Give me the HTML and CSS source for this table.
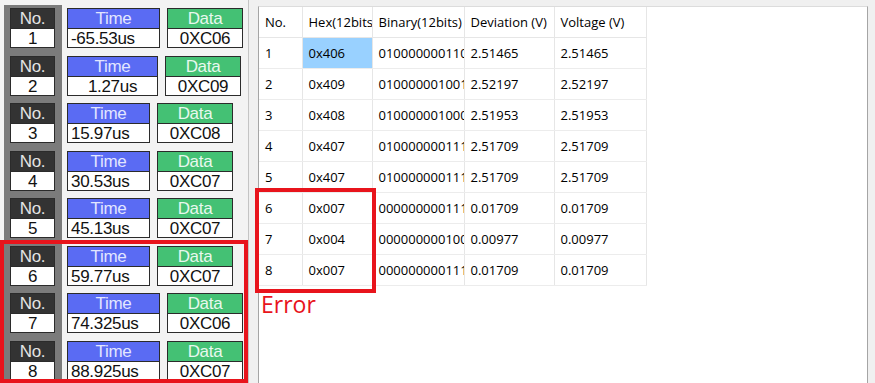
FILE: index.html
```html
<!DOCTYPE html>
<html>
<head>
<meta charset="utf-8">
<link rel="stylesheet" href="styles.css">
</head>
<body>
<div class="app">
  <div class="left">
    <div class="row">
      <div class="rail"><div class="box nobox"><div class="hd">No.</div><div class="val">1</div></div></div>
      <div class="box time t-l"><div class="hd">Time</div><div class="val">-65.53us</div></div>
      <div class="box data"><div class="hd">Data</div><div class="val">0XC06</div></div>
    </div>
    <div class="row">
      <div class="rail"><div class="box nobox"><div class="hd">No.</div><div class="val">2</div></div></div>
      <div class="box time t-m"><div class="hd">Time</div><div class="val center">1.27us</div></div>
      <div class="box data"><div class="hd">Data</div><div class="val">0XC09</div></div>
    </div>
    <div class="row">
      <div class="rail"><div class="box nobox"><div class="hd">No.</div><div class="val">3</div></div></div>
      <div class="box time t-s"><div class="hd">Time</div><div class="val">15.97us</div></div>
      <div class="box data"><div class="hd">Data</div><div class="val">0XC08</div></div>
    </div>
    <div class="row">
      <div class="rail"><div class="box nobox"><div class="hd">No.</div><div class="val">4</div></div></div>
      <div class="box time t-s"><div class="hd">Time</div><div class="val">30.53us</div></div>
      <div class="box data"><div class="hd">Data</div><div class="val">0XC07</div></div>
    </div>
    <div class="row">
      <div class="rail"><div class="box nobox"><div class="hd">No.</div><div class="val">5</div></div></div>
      <div class="box time t-s"><div class="hd">Time</div><div class="val">45.13us</div></div>
      <div class="box data"><div class="hd">Data</div><div class="val">0XC07</div></div>
    </div>
    <div class="row">
      <div class="rail"><div class="box nobox"><div class="hd">No.</div><div class="val">6</div></div></div>
      <div class="box time t-s"><div class="hd">Time</div><div class="val">59.77us</div></div>
      <div class="box data"><div class="hd">Data</div><div class="val">0XC07</div></div>
    </div>
    <div class="row">
      <div class="rail"><div class="box nobox"><div class="hd">No.</div><div class="val">7</div></div></div>
      <div class="box time t-l"><div class="hd">Time</div><div class="val">74.325us</div></div>
      <div class="box data"><div class="hd">Data</div><div class="val">0XC06</div></div>
    </div>
    <div class="row">
      <div class="rail"><div class="box nobox"><div class="hd">No.</div><div class="val">8</div></div></div>
      <div class="box time t-l"><div class="hd">Time</div><div class="val">88.925us</div></div>
      <div class="box data"><div class="hd">Data</div><div class="val">0XC07</div></div>
    </div>
    <div class="redbox redbox-left"></div>
  </div>
  <div class="right">
    <table class="grid">
      <colgroup>
        <col class="c-no"><col class="c-hex"><col class="c-bin"><col class="c-dev"><col class="c-volt">
      </colgroup>
      <thead>
        <tr><th>No.</th><th>Hex(12bits)</th><th>Binary(12bits)</th><th>Deviation (V)</th><th>Voltage (V)</th></tr>
      </thead>
      <tbody>
        <tr><td>1</td><td class="sel">0x406</td><td>010000000110</td><td>2.51465</td><td>2.51465</td></tr>
        <tr><td>2</td><td>0x409</td><td>010000001001</td><td>2.52197</td><td>2.52197</td></tr>
        <tr><td>3</td><td>0x408</td><td>010000001000</td><td>2.51953</td><td>2.51953</td></tr>
        <tr><td>4</td><td>0x407</td><td>010000000111</td><td>2.51709</td><td>2.51709</td></tr>
        <tr><td>5</td><td>0x407</td><td>010000000111</td><td>2.51709</td><td>2.51709</td></tr>
        <tr><td>6</td><td>0x007</td><td>000000000111</td><td>0.01709</td><td>0.01709</td></tr>
        <tr><td>7</td><td>0x004</td><td>000000000100</td><td>0.00977</td><td>0.00977</td></tr>
        <tr><td>8</td><td>0x007</td><td>000000000111</td><td>0.01709</td><td>0.01709</td></tr>
      </tbody>
    </table>
    <div class="error">Error</div>
    <div class="redbox redbox-table"></div>
  </div>
</div>
</body>
</html>
```

FILE: styles.css
```css
html, body {
  margin: 0;
  padding: 0;
  background: #f0f0f0;
  height: 100%;
  overflow: hidden;
}

.app {
  display: flex;
  height: 383px;
  position: relative;
}

/* ---------- left panel ---------- */
.left {
  width: 249px;
  border-right: 1px solid #c4c4c4;
  background: #f3f3f3;
  padding: 5px 0 0 4px;
  box-sizing: border-box;
  font-family: "Liberation Sans", Arial, sans-serif;
  font-size: 17px;
  letter-spacing: -0.3px;
}

.row {
  display: flex;
  align-items: flex-start;
  height: 47.5px;
}

.rail {
  align-self: stretch;
  width: 58px;
  background: #7b7b7b;
  padding: 3px 0 0 6px;
  box-sizing: border-box;
  flex: none;
}

.box {
  border: 1px solid #2b2b2b;
  box-sizing: border-box;
  flex: none;
}

.box .hd {
  height: 19px;
  line-height: 19px;
  text-align: center;
}

.box .val {
  height: 18px;
  line-height: 19px;
  border-top: 1px solid #2b2b2b;
  background: #fff;
  color: #111;
  text-align: center;
  white-space: nowrap;
  overflow: hidden;
}

.nobox {
  width: 45px;
}
.nobox .hd {
  background: #333333;
  color: #e4e4e4;
}

.time {
  margin: 3px 0 0 5px;
}
.time .hd {
  background: #5a6bf3;
  color: #e2e6ff;
}
.time .val {
  text-align: left;
  padding-left: 3px;
}
.time .val.center {
  text-align: center;
  padding-left: 0;
}
.t-l { width: 93px; }
.t-m { width: 91px; }
.t-s { width: 83px; }

.data {
  width: 76px;
  margin: 3px 0 0 7px;
}
.data .hd {
  background: #44c174;
  color: #e8f8ee;
}

/* ---------- right panel ---------- */
.right {
  position: relative;
  width: 610px;
  margin: 6px 0 0 9px;
  background: #fff;
  border-left: 1px solid #a5a5a5;
  border-right: 1px solid #a5a5a5;
  border-top: 1px solid #dcdcdc;
  box-sizing: border-box;
  font-family: "Open Sans", "Noto Sans", sans-serif;
  font-size: 13px;
  color: #000;
}

.grid {
  border-collapse: collapse;
  table-layout: fixed;
  width: 387px;
}
.c-no { width: 43px; }
.c-hex { width: 70px; }
.c-bin { width: 92px; }
.c-dev { width: 90px; }
.c-volt { width: 92px; }

.grid th,
.grid td {
  height: 30px;
  padding: 0 0 0 6px;
  text-align: left;
  font-weight: normal;
  white-space: nowrap;
  overflow: hidden;
  text-overflow: clip;
  border-right: 1px solid #e6e6e6;
  border-bottom: 1px solid #ececec;
  vertical-align: middle;
}
.grid th {
  height: 30px;
  border-bottom: 1px solid #e6e6e6;
}
.grid td.sel {
  background: #99d1ff;
}

.error {
  margin-top: 3px;
  padding-left: 2px;
  font-size: 23px;
  line-height: 30px;
  color: #e8141c;
}

/* ---------- red highlight boxes (overlays) ---------- */
.redbox {
  position: absolute;
  border: 4px solid #e8141c;
  box-sizing: border-box;
  pointer-events: none;
}
.redbox-left {
  left: 0;
  top: 240px;
  width: 248px;
  height: 143px;
}
.redbox-table {
  left: -4px;
  top: 181px;
  width: 121px;
  height: 105px;
}
```
